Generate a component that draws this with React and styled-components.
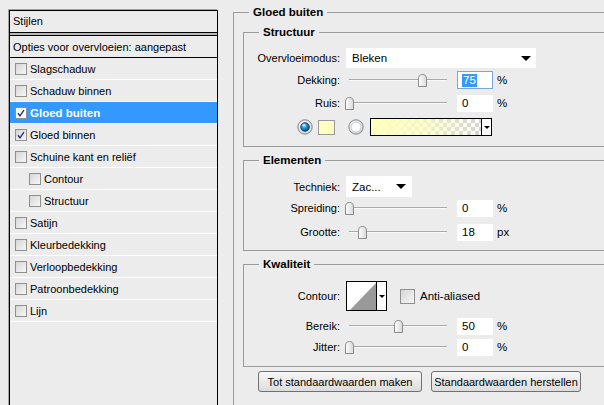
import styled, { createGlobalStyle } from 'styled-components';

const GlobalStyle = createGlobalStyle`
  html, body {
    margin: 0;
    padding: 0;
    overflow: hidden;
    background: #ececec;
  }
  body {
    font-family: "Liberation Sans", Arial, sans-serif;
    font-size: 11px;
    color: #000;
  }
`;

const Dialog = styled.div`
  display: flex;
  align-items: flex-start;
  width: 604px;
  height: 405px;
  overflow: hidden;
`;

/* ---------- styles list ---------- */

const StylesPanel = styled.div`
  flex: none;
  width: 209px;
  height: 420px;
  margin: 10px 0 0 9px;
  box-sizing: border-box;
  border: 1px solid #000;
  box-shadow: -1px -1px 0 #a4a4a4;
  background: #ececec;
`;

const PanelHeader = styled.div`
  height: 22px;
  box-sizing: border-box;
  line-height: 21px;
  padding-left: 3px;
  border-bottom: 1px solid #000;
`;

const HeaderRule = styled.div`
  height: 3px;
  box-sizing: border-box;
  background: #b8b8b8;
  border-bottom: 1px solid #000;
`;

const StyleItem = styled.div`
  display: flex;
  align-items: center;
  height: 22px;
  box-sizing: border-box;
  padding-left: ${(p) => (p.$indent ? 19 : 5)}px;
  border-bottom: 1px solid ${(p) => (p.$options ? '#000' : '#fff')};
  background: ${(p) => (p.$active ? '#3399ff' : 'transparent')};
  color: ${(p) => (p.$active ? '#fff' : '#000')};
  font-weight: ${(p) => (p.$active ? 'bold' : 'normal')};
  font-size: ${(p) => (p.$active ? '11.5px' : '11px')};
  white-space: nowrap;
`;

const OptionsItem = styled(StyleItem)`
  padding-left: 3px;
`;

const Box = styled.span`
  flex: none;
  display: inline-flex;
  align-items: center;
  justify-content: center;
  width: ${(p) => p.$size}px;
  height: ${(p) => p.$size}px;
  box-sizing: border-box;
  margin-right: ${(p) => p.$gap}px;
  border: 1px solid #8f8f8f;
  background: ${(p) =>
    p.$light
      ? 'linear-gradient(135deg, #f4f4f4, #ffffff)'
      : 'linear-gradient(135deg, #d6d6d6, #f7f7f7)'};
`;

function CheckBox({ checked, light, size = 12, gap = 3 }) {
  return (
    <Box $size={size} $gap={gap} $light={light}>
      {checked && (
        <svg width="8" height="8" viewBox="0 0 8 8">
          <path d="M1 4.2 L3 6.8 L7 1.2" fill="none" stroke="#233477" strokeWidth="1.4" />
        </svg>
      )}
    </Box>
  );
}

const effects = [
  { name: 'Slagschaduw' },
  { name: 'Schaduw binnen' },
  { name: 'Gloed buiten', checked: true, active: true },
  { name: 'Gloed binnen', checked: true },
  { name: 'Schuine kant en reliëf' },
  { name: 'Contour', indent: true },
  { name: 'Structuur', indent: true },
  { name: 'Satijn' },
  { name: 'Kleurbedekking' },
  { name: 'Verloopbedekking' },
  { name: 'Patroonbedekking' },
  { name: 'Lijn' },
];

/* ---------- settings ---------- */

const Group = styled.fieldset`
  flex: none;
  width: ${(p) => p.$width}px;
  margin: ${(p) => p.$top}px 0 0 ${(p) => p.$left}px;
  padding: ${(p) => p.$pt}px 0 ${(p) => p.$pb}px ${(p) => p.$pl}px;
  border: 1px solid #9c9c9c;
  min-width: 0;
  box-sizing: border-box;
`;

const GroupTitle = styled.legend`
  margin-left: ${(p) => p.$offset}px;
  padding: 0 4px;
  font-weight: bold;
  font-size: 11.5px;
  line-height: 14px;
`;

const FieldRow = styled.div`
  display: flex;
  align-items: center;
  height: ${(p) => p.$h}px;
  margin-top: ${(p) => p.$mt}px;
  padding-left: ${(p) => p.$pl || 0}px;
`;

const FieldLabel = styled.span`
  flex: none;
  width: 96px;
  margin-right: 6px;
  text-align: right;
  white-space: nowrap;
`;

const Select = styled.div`
  display: flex;
  align-items: center;
  justify-content: space-between;
  width: ${(p) => p.$width}px;
  height: 100%;
  box-sizing: border-box;
  padding: 0 ${(p) => p.$arrowPad}px 0 6px;
  background: #fff;
  font-size: 11.5px;
`;

const SelectArrow = styled.span`
  width: 0;
  height: 0;
  border-left: 5px solid transparent;
  border-right: 5px solid transparent;
  border-top: 5px solid #000;
`;

const Slider = styled.div`
  position: relative;
  flex: none;
  width: 104px;
  height: 13px;
  margin-right: 7px;
`;

const Track = styled.div`
  position: absolute;
  left: 3px;
  right: 3px;
  top: 5px;
  height: 2px;
  box-sizing: border-box;
  border-top: 1px solid #a9a9a9;
  border-bottom: 1px solid #fafafa;
`;

const ThumbWrap = styled.div`
  position: absolute;
  top: 0;
  left: ${(p) => 3 + p.$pos * 0.98 - 4.5}px;
  width: 9px;
  height: 13px;
`;

function SliderThumb({ pos }) {
  return (
    <ThumbWrap $pos={pos}>
      <svg width="9" height="13" viewBox="0 0 9 13">
        <defs>
          <linearGradient id="thumbFill" x1="0" y1="0" x2="1" y2="0">
            <stop offset="0" stopColor="#ffffff" />
            <stop offset="1" stopColor="#d8d8d8" />
          </linearGradient>
        </defs>
        <path
          d="M0.5 12.5 V4.8 Q0.5 0.5 4.5 0.5 Q8.5 0.5 8.5 4.8 V12.5 Z"
          fill="url(#thumbFill)"
          stroke="#8a8a8a"
        />
      </svg>
    </ThumbWrap>
  );
}

const ValueBox = styled.div`
  flex: none;
  display: flex;
  align-items: center;
  width: 36px;
  height: ${(p) => p.$h}px;
  box-sizing: border-box;
  padding-left: 4px;
  background: #fff;
  border: 1px solid ${(p) => (p.$focus ? '#7aa7d8' : '#fff')};
  font-size: 11.5px;
`;

const Selected = styled.span`
  background: #3399ff;
  color: #fff;
  padding: 0 1px;
  line-height: 13px;
`;

const Unit = styled.span`
  margin-left: 4px;
  font-size: 11.5px;
`;

function SliderField({ label, pos, value, unit, h = 17, mt, focus }) {
  return (
    <FieldRow $h={18} $mt={mt}>
      <FieldLabel>{label}</FieldLabel>
      <Slider>
        <Track />
        <SliderThumb pos={pos} />
      </Slider>
      <ValueBox $h={h} $focus={focus}>
        {focus ? <Selected>{value}</Selected> : value}
      </ValueBox>
      <Unit>{unit}</Unit>
    </FieldRow>
  );
}

const RadioWrap = styled.span`
  flex: none;
  display: inline-flex;
  margin-right: ${(p) => p.$gap}px;
`;

function Radio({ on, gap }) {
  return (
    <RadioWrap $gap={gap}>
      <svg width="16" height="16" viewBox="0 0 16 16">
        <defs>
          <radialGradient id="ringFill" cx="0.4" cy="0.35" r="0.7">
            <stop offset="0" stopColor="#ffffff" />
            <stop offset="1" stopColor="#cfcfcf" />
          </radialGradient>
          <radialGradient id="dotFill" cx="0.4" cy="0.35" r="0.7">
            <stop offset="0" stopColor="#7fd0ff" />
            <stop offset="0.5" stopColor="#1f8ccc" />
            <stop offset="1" stopColor="#0b3e66" />
          </radialGradient>
        </defs>
        <circle cx="8" cy="8" r="7.2" fill="url(#ringFill)" stroke="#7f8a95" strokeWidth="1" />
        {on ? (
          <>
            <circle cx="8" cy="8" r="4.3" fill="url(#dotFill)" stroke="#0d3350" strokeWidth="0.8" />
            <ellipse cx="7" cy="6.3" rx="1.6" ry="1" fill="#ffffff" opacity="0.85" />
          </>
        ) : (
          <circle cx="8" cy="8" r="5" fill="#fbfbfb" stroke="#c6c6c6" strokeWidth="0.8" />
        )}
      </svg>
    </RadioWrap>
  );
}

const ColorSwatch = styled.span`
  flex: none;
  width: 17px;
  height: 15px;
  box-sizing: border-box;
  margin-right: 13px;
  border: 1px solid #9a9a9a;
  background: #ffffbe;
`;

const GradientPicker = styled.div`
  display: flex;
  width: 122px;
  height: 18px;
  box-sizing: border-box;
  border: 1px solid #000;
`;

const GradientStrip = styled.div`
  flex: 1;
  background:
    linear-gradient(to right, #ffffbe 0%, rgba(255, 255, 190, 0.75) 45%, rgba(255, 255, 190, 0) 100%),
    repeating-conic-gradient(#d4d4d4 0% 25%, #ffffff 0% 50%) 0 0 / 8px 8px;
`;

const PickerButton = styled.div`
  flex: none;
  display: flex;
  align-items: center;
  justify-content: center;
  width: 9px;
  border-left: 1px solid #000;
  background: #fff;
`;

const SmallArrow = styled.span`
  width: 0;
  height: 0;
  border-left: 3px solid transparent;
  border-right: 3px solid transparent;
  border-top: 3px solid #000;
`;

const ContourPicker = styled.div`
  flex: none;
  display: flex;
  width: 41px;
  height: 30px;
  box-sizing: border-box;
  margin-right: 13px;
  border: 1px solid #000;
  background: #fff;
`;

const ContourPreview = styled.div`
  flex: 1;
  display: flex;
`;

const CheckLabel = styled.span`
  font-size: 11.5px;
  margin-left: 1px;
`;

const ButtonRow = styled.div`
  display: flex;
  gap: 9px;
  margin-top: 4px;
  padding-left: 15px;
`;

const Button = styled.button`
  height: 21px;
  width: ${(p) => p.$width}px;
  padding: 0;
  border: 1px solid #707070;
  border-radius: 3px;
  background: linear-gradient(#f7f7f7, #dcdcdc);
  font-family: "Liberation Sans", Arial, sans-serif;
  font-size: 11px;
  white-space: nowrap;
  color: #000;
`;

export default function App() {
  return (
    <>
      <GlobalStyle />
      <Dialog>
        <StylesPanel>
          <PanelHeader>Stijlen</PanelHeader>
          <HeaderRule />
          <OptionsItem $options>Opties voor overvloeien: aangepast</OptionsItem>
          {effects.map((fx) => (
            <StyleItem key={fx.name} $indent={fx.indent} $active={fx.active}>
              <CheckBox checked={fx.checked} light={fx.active} />
              {fx.name}
            </StyleItem>
          ))}
        </StylesPanel>

        <Group $width={400} $top={5} $left={15} $pt={6} $pb={40} $pl={9}>
          <GroupTitle $offset={6}>Gloed buiten</GroupTitle>

          <Group $width={380} $top={0} $left={0} $pt={0} $pb={10} $pl={0}>
            <GroupTitle $offset={15}>Structuur</GroupTitle>
            <FieldRow $h={20} $mt={9}>
              <FieldLabel>Overvloeimodus:</FieldLabel>
              <Select $width={190} $arrowPad={5}>
                Bleken
                <SelectArrow />
              </Select>
            </FieldRow>
            <SliderField label="Dekking:" pos={75} value="75" unit="%" mt={3} h={18} focus />
            <SliderField label="Ruis:" pos={0} value="0" unit="%" mt={5} />
            <FieldRow $h={18} $mt={6} $pl={53}>
              <Radio on gap={5} />
              <ColorSwatch />
              <Radio gap={6} />
              <GradientPicker>
                <GradientStrip />
                <PickerButton>
                  <SmallArrow />
                </PickerButton>
              </GradientPicker>
            </FieldRow>
          </Group>

          <Group $width={380} $top={6} $left={0} $pt={0} $pb={9} $pl={0}>
            <GroupTitle $offset={15}>Elementen</GroupTitle>
            <FieldRow $h={21} $mt={9}>
              <FieldLabel>Techniek:</FieldLabel>
              <Select $width={66} $arrowPad={6}>
                Zac...
                <SelectArrow />
              </Select>
            </FieldRow>
            <SliderField label="Spreiding:" pos={0} value="0" unit="%" mt={2} />
            <SliderField label="Grootte:" pos={13.3} value="18" unit="px" mt={6} />
          </Group>

          <Group $width={380} $top={6} $left={0} $pt={0} $pb={10} $pl={0}>
            <GroupTitle $offset={15}>Kwaliteit</GroupTitle>
            <FieldRow $h={30} $mt={10}>
              <FieldLabel>Contour:</FieldLabel>
              <ContourPicker>
                <ContourPreview>
                  <svg width="29" height="28" viewBox="0 0 29 28">
                    <polygon points="3,28 29,1 29,28" fill="#999999" />
                  </svg>
                </ContourPreview>
                <PickerButton>
                  <SmallArrow />
                </PickerButton>
              </ContourPicker>
              <CheckBox size={15} gap={4} />
              <CheckLabel>Anti-aliased</CheckLabel>
            </FieldRow>
            <SliderField label="Bereik:" pos={50} value="50" unit="%" mt={6} />
            <SliderField label="Jitter:" pos={0} value="0" unit="%" mt={3} />
          </Group>

          <ButtonRow>
            <Button $width={164}>Tot standaardwaarden maken</Button>
            <Button $width={150}>Standaardwaarden herstellen</Button>
          </ButtonRow>
        </Group>
      </Dialog>
    </>
  );
}
